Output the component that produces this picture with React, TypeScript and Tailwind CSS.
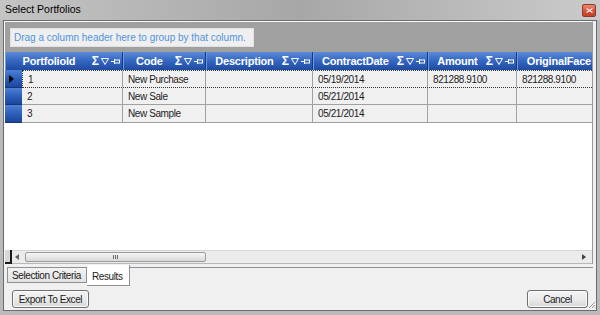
import React from 'react';

type Col = { label: string; width: number };

// first header spans the row selector too
const columns: Col[] = [
  { label: 'PortfolioId', width: 118 },
  { label: 'Code', width: 83 },
  { label: 'Description', width: 107 },
  { label: 'ContractDate', width: 115 },
  { label: 'Amount', width: 89 },
  { label: 'OriginalFace', width: 114 },
];

const cellWidths = [101, 83, 107, 115, 89, 114];

const rows = [
  ['1', 'New Purchase', '', '05/19/2014', '821288.9100', '821288.9100'],
  ['2', 'New Sale', '', '05/21/2014', '', ''],
  ['3', 'New Sample', '', '05/21/2014', '', ''],
];

const HeaderIcons = () => (
  <div className="flex items-center gap-[2px] pr-[2px] shrink-0">
    <span className="text-[12px] font-bold leading-none text-white">Σ</span>
    <svg width="8" height="7" viewBox="0 0 8 7" className="shrink-0">
      <path d="M0.5 0.5 H7.5 L4 6.5 Z" fill="none" stroke="white" strokeWidth="1" />
    </svg>
    <svg width="9" height="7" viewBox="0 0 9 7" className="shrink-0">
      <path d="M0 3.5 H3" stroke="white" strokeWidth="1" />
      <path d="M3.5 1 V6" stroke="white" strokeWidth="1" />
      <rect x="3.5" y="2" width="5" height="3" fill="none" stroke="white" strokeWidth="1" />
    </svg>
  </div>
);

const Header = () => (
  <div className="flex h-[18px] shrink-0">
    {columns.map((c) => (
      <div
        key={c.label}
        style={{ width: c.width }}
        className="shrink-0 flex items-center h-full bg-gradient-to-b from-[#5b8ad6] via-[#3466c2] to-[#1f4b9f] border-r border-[#173a7c] border-l border-l-[#6d97dc]"
      >
        <span className="flex-1 text-center text-[11px] font-bold tracking-[-0.2px] text-white whitespace-nowrap leading-none">
          {c.label}
        </span>
        <HeaderIcons />
      </div>
    ))}
  </div>
);

const RowSelector = ({ active }: { active?: boolean }) => (
  <div className="w-[17px] shrink-0 h-full flex items-center pl-[4px] bg-gradient-to-b from-[#4e80d4] via-[#2d5fbc] to-[#1c469a] border-b border-[#15367a]">
    {active && (
      <svg width="5" height="8" viewBox="0 0 5 8">
        <path d="M0 0 L5 4 L0 8 Z" fill="#000" />
      </svg>
    )}
  </div>
);

const Row = ({ cells, index }: { cells: string[]; index: number }) => {
  const first = index === 0;
  return (
    <div className={`flex shrink-0 ${index === 1 ? 'h-[17px]' : 'h-[18px]'}`}>
      <RowSelector active={first} />
      <div
        className={`flex flex-1 min-w-0 ${
          first ? 'border-y border-l border-dotted border-[#333]' : 'border-b border-[#a0a0a0]'
        }`}
      >
        {cells.map((v, i) => (
          <div
            key={i}
            style={{ width: first && i === 0 ? cellWidths[i] - 1 : cellWidths[i] }}
            className="shrink-0 h-full flex items-center pl-[5px] border-r border-[#a0a0a0] text-[10px] tracking-[-0.4px] text-[#1c1c1c] whitespace-nowrap"
          >
            {v}
          </div>
        ))}
      </div>
    </div>
  );
};

const ScrollBar = () => (
  <div className="flex h-[14px] shrink-0">
    <div className="w-[7px] shrink-0 h-full border-r-2 border-b-2 border-[#1a1a1a] bg-[#d8d8d8]" />
    <div className="flex-1 flex items-center h-full bg-[#ebebeb] border-t border-[#d6d6d6] border-b border-b-[#b8b8b8] pl-[3px] pr-[6px]">
      <svg width="4" height="6" viewBox="0 0 4 6" className="shrink-0">
        <path d="M4 0 L0 3 L4 6 Z" fill="#606060" />
      </svg>
      <div className="ml-[6px] w-[181px] h-[10px] rounded-[2px] border border-[#9c9c9c] bg-gradient-to-b from-[#f6f6f6] to-[#d9d9d9] flex items-center justify-center gap-[1px]">
        <span className="w-px h-[4px] bg-[#6a6a6a]" />
        <span className="w-px h-[4px] bg-[#6a6a6a]" />
        <span className="w-px h-[4px] bg-[#6a6a6a]" />
      </div>
      <div className="flex-1" />
      <svg width="4" height="6" viewBox="0 0 4 6" className="shrink-0">
        <path d="M0 0 L4 3 L0 6 Z" fill="#404040" />
      </svg>
    </div>
  </div>
);

const Grid = () => (
  <div className="mr-[3px] h-[243px] shrink-0 flex flex-col border-t border-l border-[#fafafa] border-r border-r-[#9a9a9a] overflow-hidden">
    <div className="h-[30px] shrink-0 bg-[#a0a0a0] pl-[5px] pt-[6px]">
      <div className="w-[244px] h-[19px] bg-[#efefef] border border-[#e2e2e2] flex items-center pl-[3px]">
        <span className="text-[10px] text-[#4f94dc] whitespace-nowrap">Drag a column header here to group by that column.</span>
      </div>
    </div>
    <Header />
    {rows.map((r, i) => (
      <Row key={i} cells={r} index={i} />
    ))}
    <div className="flex-1 bg-white" />
    <ScrollBar />
  </div>
);

const Tabs = () => (
  <div className="h-[22px] shrink-0 flex text-[10px] tracking-[-0.4px] text-[#1a1a1a]">
    <div className="ml-[3px] mt-[3px] h-[16px] w-[80px] shrink-0 border border-[#8e9097] bg-gradient-to-b from-[#f3f3f3] to-[#e2e2e2] flex items-center pl-[4px] whitespace-nowrap">
      Selection Criteria
    </div>
    <div className="mt-[1px] h-[21px] w-[43px] shrink-0 bg-white border-r border-b border-[#8e9097] flex items-center pl-[5px] pt-[2px]">
      Results
    </div>
    <div className="flex-1 mt-[3px] mr-[3px] border-t border-[#8e9097]" />
  </div>
);

const Button = ({ label, width }: { label: string; width: number }) => (
  <button
    style={{ width }}
    className="h-[18px] rounded-[3px] border border-[#707070] bg-gradient-to-b from-[#f3f3f3] via-[#ebebeb] to-[#d7d7d7] text-[10px] tracking-[-0.4px] text-[#1a1a1a] flex items-center justify-center shadow-[inset_0_0_0_1px_#fbfbfb]"
  >
    {label}
  </button>
);

export default function App() {
  return (
    <div className="w-[600px] h-[315px] flex flex-col bg-[#b9b9b9] overflow-hidden font-['Liberation_Sans',Arial,sans-serif]">
      <div className="h-[20px] shrink-0 flex items-center justify-between pl-[5px] pr-[4px] bg-gradient-to-r from-[#c4c4c4] via-[#a7a7a7] to-[#cbcbcb]">
        <span className="text-[10.5px] text-black">Select Portfolios</span>
        <div className="w-[14px] h-[13px] rounded-[2px] border border-[#8b3b2b] bg-gradient-to-b from-[#e98a70] via-[#d4553b] to-[#c24128] flex items-center justify-center">
          <svg width="7" height="5" viewBox="0 0 7 5">
            <path d="M0.5 0.5 L6.5 4.5 M6.5 0.5 L0.5 4.5" stroke="#f4e6e2" strokeWidth="1.3" />
          </svg>
        </div>
      </div>
      <div className="flex-1 min-h-0 mx-[3px] mb-[4px] border border-[#6c6c6c] bg-[#f0f0f0] flex flex-col">
        <Grid />
        <Tabs />
        <div className="flex-1 flex items-start pt-[4px] pl-[8px]">
          <Button label="Export To Excel" width={77} />
          <div className="flex-1" />
          <Button label="Cancel" width={61} />
          <svg width="8" height="8" viewBox="0 0 8 8" className="self-end mb-[1px] shrink-0">
            <path d="M7 1 L1 7 M7 4 L4 7 M7 6.5 L6.5 7" stroke="#9a9a9a" strokeWidth="1" />
          </svg>
        </div>
      </div>
    </div>
  );
}
